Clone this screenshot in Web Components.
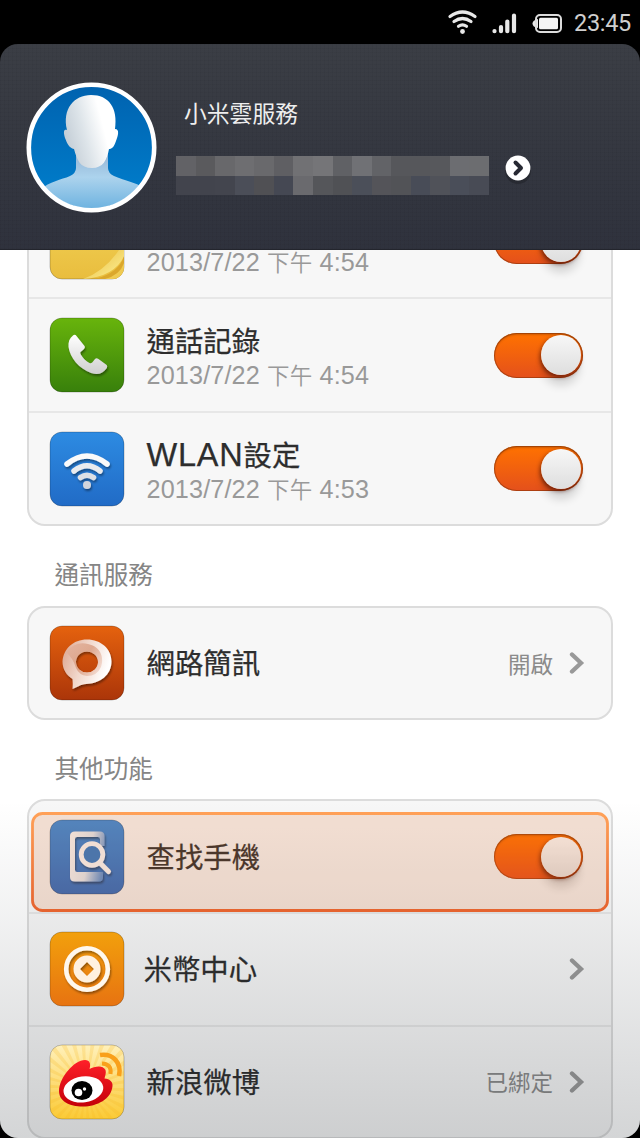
<!DOCTYPE html>
<html lang="zh-Hant">
<head>
<meta charset="utf-8">
<title>小米雲服務</title>
<style>
    html, body { margin: 0; height: 100%; background: #000; overflow: hidden; }
    body { font-family: "Liberation Sans", "Noto Sans CJK TC", sans-serif; }
</style>
</head>
<body>
<cloud-screen>
    <status-bar slot="status">23:45</status-bar>
    <account-header slot="header">小米雲服務</account-header>

    <setting-group>
        <setting-row icon="notes" date="2013/7/22" time="4:54" toggle>便籤</setting-row>
        <setting-row icon="phone" date="2013/7/22" time="4:54" toggle>通話記錄</setting-row>
        <setting-row icon="wifi" date="2013/7/22" time="4:53" toggle><span style="font-size:32.5px;letter-spacing:.8px">WLAN</span>設定</setting-row>
    </setting-group>
    <setting-group label="通訊服務" style="--label-height:79.7px">
        <setting-row icon="message" value="開啟">網路簡訊</setting-row>
    </setting-group>
    <setting-group label="其他功能" style="--label-height:79.2px; --row-height:112.8px">
        <setting-row icon="find" toggle highlight>查找手機</setting-row>
        <setting-row icon="coin" style="--shift:-3px">米幣中心</setting-row>
        <setting-row icon="weibo" value="已綁定">新浪微博</setting-row>
    </setting-group>
</cloud-screen>

<script>
const gradient = (id, top, bottom) => `
    <linearGradient id="${id}" x1="0" y1="0" x2="0" y2="1">
        <stop offset="0" stop-color="${top}"/><stop offset="1" stop-color="${bottom}"/>
    </linearGradient>`

const tile = (top, bottom, art) => `
    <svg viewBox="0 0 76 76">
        <defs>
            ${gradient('bg', top, bottom)}
            ${gradient('ink', '#ffffff', '#cfcfcf')}
            <filter id="drop" x="-20%" y="-20%" width="150%" height="150%">
                <feDropShadow dx="1" dy="2" stdDeviation="1.3" flood-opacity=".4"/>
            </filter>
            <clipPath id="clip"><rect x="1" y="1" width="74" height="74" rx="12"/></clipPath>
        </defs>
        <rect x="1" y="1" width="74" height="74" rx="12" fill="url(#bg)" stroke="#000" stroke-opacity=".28" stroke-width=".8"/>
        ${art}
    </svg>`

const rays = Array.from({ length: 30 }, (_, i) => {
    const a = i * Math.PI / 15, b = a + .09
    return `M37 44L${37 + 70 * Math.cos(a)} ${44 + 70 * Math.sin(a)}L${37 + 70 * Math.cos(b)} ${44 + 70 * Math.sin(b)}Z`
}).join('')

const icons = {
    notes: tile('#f3d458', '#e9bd3e', `
        <defs><linearGradient id="curl" x1=".3" y1=".3" x2=".8" y2=".9">
            <stop offset="0" stop-color="#ecc44a"/><stop offset="1" stop-color="#fae98a"/>
        </linearGradient></defs>
        <g clip-path="url(#clip)">
            <path d="M75 52Q70 69 46 75H75Z" fill="#dba72c"/>
            <path d="M76 36Q60 66 34 75Q67 73 76 50Z" fill="url(#curl)"/>
            <path d="M56 75Q71 71 75 59V75Z" fill="#efca52"/>
        </g>`),
    phone: tile('#68b40c', '#38800b', `
        <path filter="url(#drop)" fill="url(#ink)" d="M24 18.5C25 17.500 26.500 17.500 27.500 19L35.500 29C36.500 30.500 35.500 31.500 34 33L31.500 35C31 36 31.500 37 32.500 38.500C34.500 41.500 37 44.500 40.500 46C42 46.500 43 46 44 44.500L46 42C47 41 48 41 49.500 42L57 47.500C58.500 48.500 58.500 50 57.500 51.500C54 56.500 49 58.500 42 56C30 51.500 21 41 19.500 30C19 25 20.500 21 24 18.500Z"/>`),
    wifi: tile('#2d8be2', '#216bc6', `
        <g filter="url(#drop)" fill="none" stroke-linecap="round">
            <path d="M18 33Q38 17 58 33" stroke="#fafafa" stroke-width="5.500"/>
            <path d="M25 40Q38 29.500 51 40" stroke="#e9ebee" stroke-width="5.500"/>
            <path d="M31.500 46.500Q38 42 44.500 46.500" stroke="#dde0e5" stroke-width="5.500"/>
            <circle cx="38" cy="54" r="4" fill="#d2d5dc"/>
        </g>`),
    message: tile('#e5620e', '#ab3509', `
        <defs><linearGradient id="ring" x1="0" y1="0" x2="1" y2=".35">
            <stop offset="0" stop-color="#dba28b"/><stop offset=".5" stop-color="#f1d7cb"/><stop offset="1" stop-color="#fff"/>
        </linearGradient>
        <linearGradient id="lip" x1="0" y1=".2" x2="1" y2=".8">
            <stop offset="0" stop-color="#e3b29d"/><stop offset=".5" stop-color="#cf8563"/><stop offset="1" stop-color="#f0cfc2"/>
        </linearGradient></defs>
        <g filter="url(#drop)">
            <path fill="url(#ring)" fill-rule="evenodd" d="M38 14.500C52 14.500 62.500 24 62.500 36.500C62.500 50 51 58.500 37 59C32 59 27 63 23.500 64Q24 59 23.500 54C17.500 50.500 13.500 44 13.500 36.500C14.500 24 24 14.500 38 14.500ZM38 26.500A11 10.500 0 1 0 38 47.500A11 10.500 0 1 0 38 26.500Z"/>
            <path fill="url(#lip)" fill-rule="evenodd" d="M17 27Q26 16 39 19C53 22 55 34 52 42Q48 51 38 51Q30 50 27 43Q24 33 17 27ZM38 26.500A11 10.500 0 1 0 38 47.500A11 10.500 0 1 0 38 26.500Z" opacity=".6"/>
        </g>`),
    find: tile('#388adb', '#2b68bd', `
        <defs><linearGradient id="frame" x1="0" y1=".3" x2="1" y2=".6">
            <stop offset="0" stop-color="#f2f5f8"/><stop offset=".55" stop-color="#dde6ef"/><stop offset="1" stop-color="#5b90d0"/>
        </linearGradient></defs>
        <g filter="url(#drop)">
            <path fill="url(#frame)" fill-rule="evenodd" d="M26 12.500H51Q55.500 12.500 55.500 17V27H51V20Q51 18 49 18H28Q26 18 26 20V51Q26 53 28 53H54V58Q54 62.500 50 62.500H26Q21 62.500 21 58V17Q21 12.500 26 12.500Z"/>
        </g>
        <g filter="url(#drop)">
            <circle cx="43" cy="35.500" r="10.800" fill="#2f78c6" stroke="#f4f6f8" stroke-width="4.800"/>
            <path d="M50.500 43.500L59.500 52.500" stroke="#f4f6f8" stroke-width="5" stroke-linecap="round"/>
        </g>`),
    coin: tile('#f2a00c', '#e77311', `
        <g filter="url(#drop)">
            <circle cx="38" cy="38" r="20.800" fill="none" stroke="#fff8ee" stroke-width="4.600"/>
            <path fill="#fff1df" fill-rule="evenodd" d="M38 24.500A13.500 13.500 0 1 0 38 51.500A13.500 13.500 0 1 0 38 24.500ZM38 31L45 38L38 45L31 38Z"/>
        </g>`),
    weibo: tile('#fff0ba', '#fbca35', `
        <path clip-path="url(#clip)" d="${rays}" fill="#f6b51e" opacity=".22"/>
        <defs>${gradient('red', '#ff2029', '#c40009')}</defs>
        <path d="M10 47C10 34 25 16 36 16C41 16 42 20 40.500 25C46 22 54 21 56.500 26C57.500 29 56 32 55.500 34.500C61 35 64 38 63.500 42C62.500 55 48 62.500 34 62.500C20 62.500 10 57 10 47Z" fill="url(#red)"/>
        <ellipse cx="34.500" cy="45.500" rx="20" ry="13" transform="rotate(-8 34 46)" fill="#fff"/>
        <ellipse cx="33" cy="46.500" rx="10.500" ry="9.500" fill="#000"/>
        <circle cx="29.500" cy="48.500" r="3.800" fill="#fff"/><circle cx="35.500" cy="45" r="1.700" fill="#fff"/>
        <path d="M53 19.500Q63 20 61.500 30" fill="none" stroke="#f9a01b" stroke-width="4"/>
        <path d="M51 11C64 9 73 19 70 32" fill="none" stroke="#f9a01b" stroke-width="4.500"/>`)
}

class CloudScreen extends HTMLElement {
    constructor() {
        super()
        this.attachShadow({ mode: 'open' }).innerHTML = `
            <style>
                :host {
                    display: flex; flex-direction: column; position: relative;
                    height: 1138px; width: 640px; overflow: hidden;
                }
                main {
                    flex: 1; min-height: 0; overflow: hidden; background: #fff;
                    padding: 0 27px; border-radius: 0 0 18px 18px;
                }
                .list { margin-top: -66.300px; }
                /* the list fades toward the bottom edge, under icons and switches */
                .shade {
                    position: absolute; left: 0; right: 0; bottom: 0; height: 338px;
                    border-radius: 0 0 18px 18px; pointer-events: none;
                    background: linear-gradient(rgba(25,32,38,0), rgba(25,32,38,.06) 34%, rgba(25,32,38,.19));
                }
            </style>
            <slot name="status"></slot>
            <slot name="header"></slot>
            <main><div class="list"><slot></slot></div></main>
            <div class="shade"></div>`
    }
}

class StatusBar extends HTMLElement {
    constructor() {
        super()
        this.attachShadow({ mode: 'open' }).innerHTML = `
            <style>
                :host {
                    display: flex; align-items: center; justify-content: flex-end; box-sizing: border-box;
                    height: 44px; padding: 2px 9px 0 0; color: #cfcfcf;
                    font: 23.500px/40px Roboto, "Liberation Sans", sans-serif;
                }
                svg { width: 124px; height: 40px; margin-right: 3px; }
                .time { letter-spacing: -.3px; }
            </style>
            <svg viewBox="0 0 124 40">
                <g fill="none" stroke="#e8e8e8" stroke-width="3.200" stroke-linecap="round">
                    <path d="M3 13.500Q15.500 4.500 28 13.500"/>
                    <path d="M7 18.500Q15.500 12.500 24 18.500"/>
                    <path d="M11.500 23.300Q15.500 20.500 19.500 23.300"/>
                </g>
                <circle cx="15.500" cy="28.500" r="2.400" fill="#e8e8e8"/>
                <path d="M47.500 28.200V28M54 28.200V24M60.300 28.200V18.500M67 28.200V12.500" stroke="#e8e8e8" stroke-width="4.200" stroke-linecap="round"/>
                <path d="M91 16Q85.500 17 85.500 20.500Q85.500 24 91 25Z" fill="#e8e8e8"/>
                <rect x="89" y="12" width="25" height="17" rx="4" fill="none" stroke="#dcdcdc" stroke-width="2"/>
                <rect x="92" y="14.800" width="19" height="11.400" rx="1.500" fill="#f4f4f4"/>
            </svg>
            <span class="time"><slot></slot></span>`
    }
}

class AccountHeader extends HTMLElement {
    constructor() {
        super()
        // two rows of censor blocks over the account id
        const blocks = ['626266 5a5a5d 68686b 6e6e71 69696c 5f5f63 717174 757578 606165 707175 626367 56575b 56575b 57585c 6c6d71 6c6d70',
            '42444d 42444d 43454e 4b4e58 505054 454853 6a6a6e 55565a 505155 4b4f59 545459 525357 484c57 505259 4a4e59 484b55']
            .join(' ').split(' ').map(c => `<i style="background:#${c}"></i>`).join('')
        this.attachShadow({ mode: 'open' }).innerHTML = `
            <style>
                :host {
                    display: flex; box-sizing: border-box; height: 206px; padding: 38px 0 0 26px;
                    border-radius: 18px 18px 0 0; color: #eee; border-bottom: 1px solid #23252d;
                    background:
                        repeating-linear-gradient(90deg, rgba(0,0,0,.03) 0 1px, transparent 1px 4px),
                        repeating-linear-gradient(rgba(0,0,0,.03) 0 1px, transparent 1px 4px),
                        linear-gradient(#3b3e45, #2f323d);
                }
                .avatar { width: 131px; height: 131px; }
                .info { margin: 14px 0 0 19px; width: 313px; }
                .name { font: 22.800px/34px "Noto Sans CJK TC", sans-serif; padding-left: 8px; }
                .id { display: grid; grid-template-columns: repeat(16, 1fr); grid-auto-rows: 19.500px; margin-top: 26px; }
                .go { width: 30px; height: 34px; margin: 71px 0 0 13.500px; }
            </style>
            <svg class="avatar" viewBox="0 0 131 131">
                <defs>
                    ${gradient('sky', '#0062af', '#0080ce')}
                    <linearGradient id="head" x1="0" y1=".6" x2="1" y2=".25">
                        <stop offset="0" stop-color="#c2ccd5"/><stop offset=".35" stop-color="#dde4e9"/><stop offset=".7" stop-color="#fff"/>
                    </linearGradient>
                    <linearGradient id="shoulder" x1="0" y1="0" x2="0" y2="1">
                        <stop offset="0" stop-color="#8eadcf"/><stop offset=".45" stop-color="#acd3ed"/><stop offset="1" stop-color="#65aede"/>
                    </linearGradient>
                    <clipPath id="round"><circle cx="65.500" cy="65.500" r="61"/></clipPath>
                </defs>
                <circle cx="65.500" cy="65.500" r="62.500" fill="url(#sky)"/>
                <g clip-path="url(#round)">
                    <path d="M50 66H82V86Q82 91 88 94C100 99 109 100 118 106V131H14V108C24 99 35 98 44 94Q50 91 50 86Z" fill="url(#shoulder)"/>
                    <path d="M65 13C83 13 92 26 89 47C94 47 92 54 90 59C88 65 86 67 83 67C81 78 77 86 66 86C54 86 51 78 48 67C43 66 41 61 39 56C37 49 38 47 41 48C36 27 48 13 65 13Z" fill="url(#head)"/>
                </g>
                <circle cx="65.500" cy="65.500" r="62.700" fill="none" stroke="#fff" stroke-width="4.600"/>
            </svg>
            <div class="info">
                <div class="name"><slot></slot></div>
                <div class="id">${blocks}</div>
            </div>
            <svg class="go" viewBox="0 0 30 34">
                <circle cx="15" cy="18" r="13" fill="#000" opacity=".2"/>
                <circle cx="15" cy="15" r="12.400" fill="#fff"/>
                <path d="M12.500 9.500L18 15L12.500 20.500" fill="none" stroke="#272933" stroke-width="4" stroke-linecap="round" stroke-linejoin="round"/>
            </svg>`
    }
}

class SettingGroup extends HTMLElement {
    constructor() {
        super()
        const label = this.getAttribute('label')
        this.attachShadow({ mode: 'open' }).innerHTML = `
            <style>
                :host { display: block; }
                .label {
                    height: var(--label-height); padding: 0 0 0 27.500px; color: #858585;
                    font: 24.600px/94px "Noto Sans CJK TC", sans-serif;
                }
                .card { border: 2px solid #dcdcdc; border-radius: 18px; background: #f7f7f7; }
            </style>
            ${label ? `<div class="label">${label}</div>` : ''}
            <div class="card"><slot></slot></div>`
    }
}

class ToggleSwitch extends HTMLElement {
    constructor() {
        super()
        this.attachShadow({ mode: 'open' }).innerHTML = `
            <style>
                :host {
                    display: flex; justify-content: flex-end; box-sizing: border-box;
                    width: 89px; height: 45px; padding: 2.500px; border-radius: 23px;
                    background: linear-gradient(#ff7200, #e4501c);
                    box-shadow: inset 0 0 0 1px rgba(130,50,10,.55), inset 0 2px 2px rgba(120,50,0,.35);
                    position: relative; z-index: 1;
                }
                .knob {
                    width: 40px; height: 40px; border-radius: 50%;
                    background: linear-gradient(#f7f7f7, #dedede);
                    box-shadow: -1px 2px 4px rgba(60,10,0,.65), 0 12px 8px -1px rgba(0,0,0,.13);
                }
            </style>
            <div class="knob"></div>`
    }
}

class SettingRow extends HTMLElement {
    constructor() {
        super()
        const get = name => this.getAttribute(name)
        const sub = get('date') ? `<div class="sub">${get('date')} <b>下午</b> ${get('time')}</div>` : ''
        const end = this.hasAttribute('toggle') ? '<toggle-switch></toggle-switch>' : `
            ${get('value') ? `<span class="value">${get('value')}</span>` : ''}
            <svg class="chevron" viewBox="0 0 16 24">
                <path d="M3 3.500L12 12L3 20.500" fill="none" stroke="#999" stroke-width="4.300" stroke-linecap="round" stroke-linejoin="miter"/>
            </svg>`
        const mark = this.hasAttribute('highlight') ? `
            <svg class="mark" viewBox="0 0 578 100">
                <defs>${gradient('edge', '#ffa057', '#e5632f')}</defs>
                <rect x="1.500" y="1.500" width="575" height="97" rx="10" fill="#df6a23" fill-opacity=".17" stroke="url(#edge)" stroke-width="2.800"/>
            </svg>` : ''
        this.attachShadow({ mode: 'open' }).innerHTML = `
            <style>
                :host {
                    display: flex; align-items: center; box-sizing: border-box; position: relative;
                    height: var(--row-height, 113.600px); padding: 0 26px 0 20px; border-bottom: 2px solid #e7e7e7; color: #2d2d2d;
                }
                :host(:last-child) { border-bottom: 0; height: 109.800px; }
                :host([date]:last-child) { height: 111.600px; }
                :host([toggle]) { padding-right: 28px; }
                .icon { width: 76px; height: 76px; position: relative; z-index: 1; }
                .icon svg { display: block; }
                .text { flex: 1; margin-left: calc(21.500px + var(--shift, 0px)); padding-top: 2px; white-space: nowrap; }
                :host([date]) .text { padding-top: 3px; }
                .title { font: 28.400px/36px "Liberation Sans", "Noto Sans CJK TC", sans-serif; -webkit-text-stroke: .25px; }
                .sub { font: 25.200px/28px "Liberation Sans", sans-serif; letter-spacing: .15px; color: #999; }
                .sub b { font: 350 22.500px/28px "Noto Sans CJK TC", sans-serif; }
                .value { font: 22.500px/32px "Noto Sans CJK TC", sans-serif; color: #8b8b8b; margin: -1px 16px 0 0; }
                .chevron { width: 16px; height: 24px; }
                .mark { position: absolute; left: 2px; top: 11px; width: 578px; height: 100px; z-index: 2; }
            </style>
            <div class="icon">${icons[get('icon')]}</div>
            <div class="text"><div class="title"><slot></slot></div>${sub}</div>
            ${end}${mark}`
    }
}

customElements.define('toggle-switch', ToggleSwitch)
customElements.define('setting-row', SettingRow)
customElements.define('setting-group', SettingGroup)
customElements.define('account-header', AccountHeader)
customElements.define('status-bar', StatusBar)
customElements.define('cloud-screen', CloudScreen)
</script>
</body>
</html>
